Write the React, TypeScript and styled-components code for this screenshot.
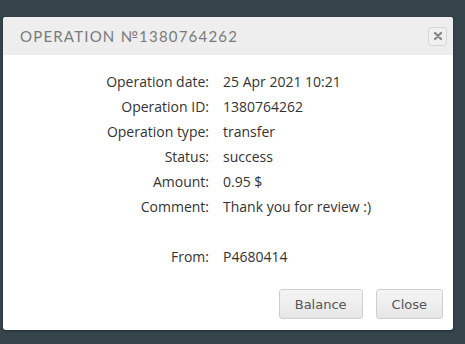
import React from 'react';
import styled, { createGlobalStyle } from 'styled-components';

const GlobalStyle = createGlobalStyle`
  html, body {
    margin: 0;
    padding: 0;
    background: #36444c;
  }
  body {
    width: 465px;
    height: 344px;
    overflow: hidden;
  }
`;

const S_Page = styled.div`
  display: flex;
  align-items: flex-start;
  padding: 17px 12px 0 3px;
  height: 344px;
  box-sizing: border-box;
`;

const S_Dialog = styled.div`
  width: 450px;
  height: 313px;
  background: #fff;
  border-radius: 3px;
  box-shadow: 0 1px 3px rgba(0, 0, 0, 0.35);
  display: flex;
  flex-direction: column;
  overflow: hidden;
`;

const S_Header = styled.div`
  height: 38px;
  background: #eeeeee;
  display: flex;
  align-items: center;
  justify-content: space-between;
  padding: 0 6px 0 17px;
`;

const S_Title = styled.h3`
  margin: 0;
  font-family: 'Lato', 'Noto Sans', sans-serif;
  font-weight: 400;
  font-size: 15px;
  letter-spacing: 1.2px;
  color: #7a7a7a;
  text-transform: uppercase;
`;

const S_CloseX = styled.button`
  width: 19px;
  height: 19px;
  padding: 0;
  border: 1px solid #d6d6d6;
  border-radius: 3px;
  background: #f0f0f0;
  display: flex;
  align-items: center;
  justify-content: center;
  cursor: pointer;
`;

const S_Body = styled.div`
  flex: 1;
  display: grid;
  grid-template-columns: 206px 1fr;
  grid-auto-rows: 25px;
  column-gap: 14px;
  align-content: start;
  padding-top: 14px;
  font-family: 'Open Sans', 'Noto Sans', sans-serif;
  font-size: 14px;
  color: #333;
`;

const S_Label = styled.div`
  text-align: right;
  align-self: center;
`;

const S_Value = styled.div`
  align-self: center;
`;

const S_Spacer = styled.div`
  grid-column: 1 / -1;
`;

const S_Footer = styled.div`
  display: flex;
  justify-content: flex-end;
  gap: 13px;
  padding: 0 10px 11px 0;
`;

const S_Button = styled.button`
  height: 30px;
  padding: 0 15px;
  border: 1px solid #cfcfcf;
  border-radius: 3px;
  background: linear-gradient(#f5f5f5, #e6e6e6);
  font-family: 'DejaVu Sans', Verdana, sans-serif;
  font-size: 13px;
  color: #555;
  cursor: pointer;
`;

const rows: [string, string][] = [
  ['Operation date:', '25 Apr 2021 10:21'],
  ['Operation ID:', '1380764262'],
  ['Operation type:', 'transfer'],
  ['Status:', 'success'],
  ['Amount:', '0.95 $'],
  ['Comment:', 'Thank you for review :)'],
];

export default function App() {
  return (
    <>
      <GlobalStyle />
      <S_Page>
        <S_Dialog>
          <S_Header>
            <S_Title>Operation №1380764262</S_Title>
            <S_CloseX aria-label="close">
              <svg width="10" height="10" viewBox="0 0 10 10">
                <path d="M2 2 L8 8 M8 2 L2 8" stroke="#888" strokeWidth="2.4" strokeLinecap="round" />
              </svg>
            </S_CloseX>
          </S_Header>
          <S_Body>
            {rows.map(([label, value]) => (
              <React.Fragment key={label}>
                <S_Label>{label}</S_Label>
                <S_Value>{value}</S_Value>
              </React.Fragment>
            ))}
            <S_Spacer />
            <S_Label>From:</S_Label>
            <S_Value>P4680414</S_Value>
          </S_Body>
          <S_Footer>
            <S_Button>Balance</S_Button>
            <S_Button>Close</S_Button>
          </S_Footer>
        </S_Dialog>
      </S_Page>
    </>
  );
}
